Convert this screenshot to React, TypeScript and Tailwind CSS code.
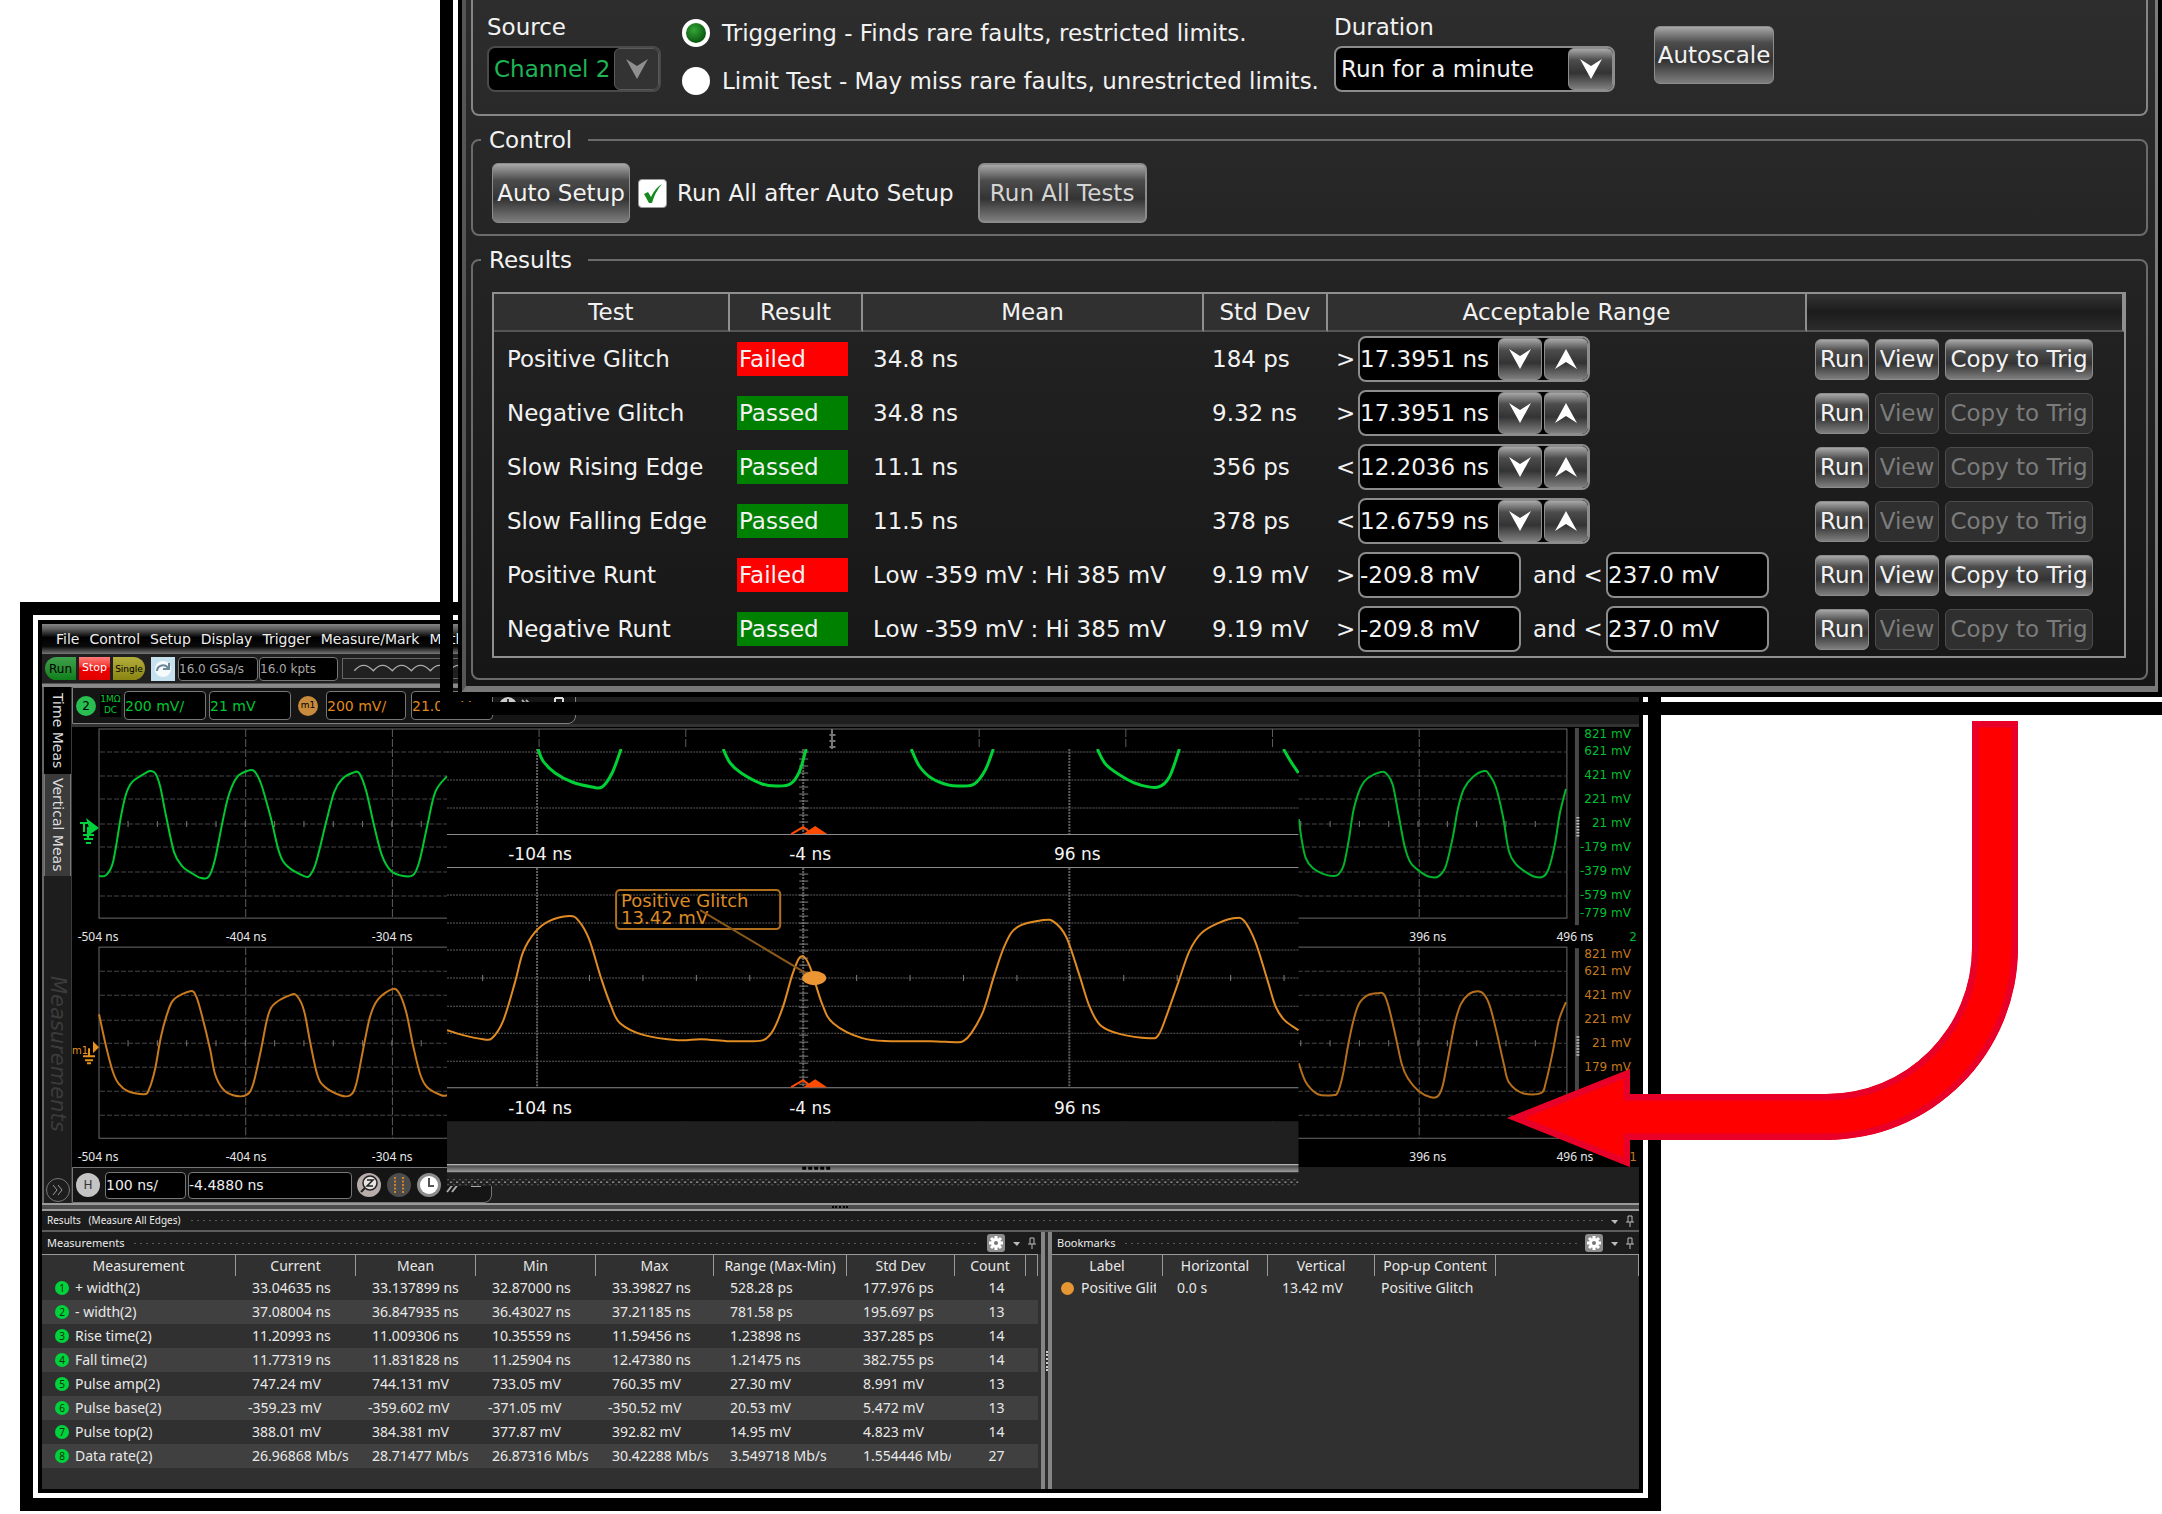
import type { ReactNode } from 'react'

const metal = 'border border-[#8c8c8c] bg-[linear-gradient(to_bottom,#a8a8a8_0%,#4c4c4c_28%,#333_60%,#7e7e7e_100%)]'
const tests = [
  { name: 'Positive Glitch', pass: false, mean: '34.8 ns', dev: '184 ps', sign: '>', low: '17.3951 ns' },
  { name: 'Negative Glitch', pass: true, mean: '34.8 ns', dev: '9.32 ns', sign: '>', low: '17.3951 ns' },
  { name: 'Slow Rising Edge', pass: true, mean: '11.1 ns', dev: '356 ps', sign: '<', low: '12.2036 ns' },
  { name: 'Slow Falling Edge', pass: true, mean: '11.5 ns', dev: '378 ps', sign: '<', low: '12.6759 ns' },
  { name: 'Positive Runt', pass: false, mean: 'Low -359 mV : Hi 385 mV', dev: '9.19 mV', sign: '>', low: '-209.8 mV', high: '237.0 mV' },
  { name: 'Negative Runt', pass: true, mean: 'Low -359 mV : Hi 385 mV', dev: '9.19 mV', sign: '>', low: '-209.8 mV', high: '237.0 mV' },
]

const measurements = [
  ['+ width(2)', '33.04635 ns', '33.137899 ns', '32.87000 ns', '33.39827 ns', '528.28 ps', '177.976 ps', '14'],
  ['- width(2)', '37.08004 ns', '36.847935 ns', '36.43027 ns', '37.21185 ns', '781.58 ps', '195.697 ps', '13'],
  ['Rise time(2)', '11.20993 ns', '11.009306 ns', '10.35559 ns', '11.59456 ns', '1.23898 ns', '337.285 ps', '14'],
  ['Fall time(2)', '11.77319 ns', '11.831828 ns', '11.25904 ns', '12.47380 ns', '1.21475 ns', '382.755 ps', '14'],
  ['Pulse amp(2)', '747.24 mV', '744.131 mV', '733.05 mV', '760.35 mV', '27.30 mV', '8.991 mV', '13'],
  ['Pulse base(2)', '-359.23 mV', '-359.602 mV', '-371.05 mV', '-350.52 mV', '20.53 mV', '5.472 mV', '13'],
  ['Pulse top(2)', '388.01 mV', '384.381 mV', '377.87 mV', '392.82 mV', '14.95 mV', '4.823 mV', '14'],
  ['Data rate(2)', '26.96868 Mb/s', '28.71477 Mb/s', '26.87316 Mb/s', '30.42288 Mb/s', '3.549718 Mb/s', '1.554446 Mb/s', '27'],
]

// Traces, as x y pairs in display units
const greenLeft = [99, 877, 106, 876, 113, 863, 121, 817, 126, 795, 132, 783, 142, 776, 150, 772, 155, 774, 160, 787, 166, 817, 174, 853, 182, 867, 190, 873, 201, 879, 209, 877, 215, 860, 223, 820, 229, 795, 237, 778, 247, 772, 254, 772, 261, 785, 271, 820, 279, 853, 287, 867, 304, 877, 310, 876, 316, 863, 326, 823, 334, 793, 342, 780, 352, 774, 359, 774, 366, 792, 374, 827, 382, 857, 391, 872, 403, 877, 413, 876, 419, 863, 427, 827, 435, 793, 447, 777]
const greenRight = [1298, 820, 1301, 841, 1305, 859, 1312, 869, 1323, 875, 1333, 877, 1338, 875, 1343, 866, 1348, 841, 1353, 810, 1360, 788, 1367, 779, 1380, 773, 1386, 775, 1392, 786, 1398, 817, 1404, 848, 1410, 864, 1420, 873, 1430, 878, 1438, 877, 1445, 867, 1452, 838, 1457, 810, 1463, 790, 1472, 778, 1483, 772, 1488, 775, 1495, 788, 1502, 817, 1508, 852, 1515, 865, 1525, 873, 1535, 878, 1543, 877, 1548, 869, 1554, 845, 1559, 814, 1565, 790]
const orangeLeft = [99, 1015, 106, 1047, 113, 1073, 119, 1085, 128, 1092, 144, 1095, 149, 1090, 155, 1070, 161, 1037, 168, 1012, 174, 1000, 190, 992, 196, 997, 202, 1017, 210, 1050, 215, 1075, 223, 1090, 233, 1096, 246, 1096, 253, 1085, 261, 1050, 267, 1020, 273, 1006, 290, 996, 297, 997, 304, 1012, 310, 1043, 317, 1075, 324, 1087, 340, 1096, 350, 1096, 356, 1085, 363, 1050, 370, 1017, 378, 1000, 392, 990, 399, 994, 406, 1013, 413, 1047, 420, 1075, 427, 1088, 441, 1096, 447, 1096]
const orangeRight = [1298, 1064, 1302, 1076, 1307, 1086, 1317, 1095, 1332, 1096, 1337, 1093, 1342, 1076, 1347, 1048, 1352, 1024, 1358, 1005, 1367, 996, 1377, 994, 1383, 995, 1388, 1008, 1395, 1038, 1401, 1065, 1407, 1079, 1418, 1092, 1430, 1098, 1437, 1097, 1442, 1086, 1448, 1055, 1454, 1024, 1460, 1005, 1468, 995, 1477, 992, 1483, 995, 1489, 1007, 1496, 1034, 1503, 1065, 1508, 1083, 1522, 1094, 1540, 1094, 1545, 1083, 1552, 1052, 1558, 1021, 1565, 1003]
const troughs = [
  [538, 750, 543, 762, 555, 774, 572, 783, 592, 788, 602, 788, 612, 774, 621, 750],
  [723, 750, 730, 764, 741, 774, 762, 785, 777, 787, 790, 785, 799, 773, 806, 750],
  [911, 750, 919, 767, 931, 779, 948, 786, 961, 787, 974, 785, 985, 771, 993, 750],
  [1097, 750, 1106, 766, 1126, 780, 1140, 786, 1158, 788, 1169, 778, 1179, 750],
  [1283, 750, 1290, 762, 1298, 774],
]
const zoomOrange = [447, 1031, 463, 1036, 483, 1040, 492, 1039, 503, 1022, 515, 983, 523, 953, 535, 933, 549, 922, 569, 917, 578, 921, 589, 940, 601, 979, 611, 1007, 620, 1024, 644, 1036, 678, 1041, 701, 1040, 727, 1042, 745, 1042, 763, 1041, 773, 1031, 783, 1007, 792, 976, 799, 959, 805, 959, 811, 971, 822, 1005, 833, 1024, 862, 1039, 891, 1042, 930, 1042, 955, 1043, 963, 1042, 971, 1034, 983, 1012, 994, 976, 1005, 945, 1017, 928, 1043, 921, 1054, 923, 1066, 938, 1079, 976, 1089, 1007, 1100, 1026, 1120, 1035, 1149, 1039, 1158, 1036, 1166, 1017, 1178, 983, 1189, 952, 1201, 934, 1218, 924, 1235, 919, 1244, 922, 1255, 943, 1267, 981, 1275, 1007, 1284, 1021, 1298, 1031]

// Catmull-Rom through the points
function smooth(p: number[]) {
  const n = p.length / 2
  const at = (i: number) => {
    const k = Math.min(Math.max(i, 0), n - 1)
    return [p[k * 2], p[k * 2 + 1]]
  }
  let d = `M${p[0]} ${p[1]}`
  for (let i = 0; i < n - 1; i++) {
    const [a, b, c, e] = [at(i - 1), at(i), at(i + 1), at(i + 2)]
    d += `C${b[0] + (c[0] - a[0]) / 6} ${b[1] + (c[1] - a[1]) / 6} ${c[0] - (e[0] - b[0]) / 6} ${c[1] - (e[1] - b[1]) / 6} ${c[0]} ${c[1]}`
  }
  return d
}

function Dart({ up, dim }: { up?: boolean, dim?: boolean }) {
  return (
    <svg className={up ? 'rotate-180' : ''} width="22" height="20" viewBox="0 0 22 20">
      <path d="M0 0L11 7L22 0L11 20Z" fill={dim ? '#8f8f8f' : '#fff'} />
    </svg>
  )
}

function Btn({ children, className = '', disabled }: { children: ReactNode, className?: string, disabled?: boolean }) {
  return (
    <button
      disabled={disabled}
      className={`flex items-center justify-center whitespace-nowrap rounded-md ${disabled ? 'border border-[#4c4c4c] bg-[#2f2f2f] text-[#7c7c7c]' : metal} ${className}`}
    >
      {children}
    </button>
  )
}

function Select({ id, value, dim }: { id: string, value: string, dim?: boolean }) {
  return (
    <div className="relative">
      <select id={id} disabled={dim} defaultValue={value} className={`h-[46px] w-full appearance-none rounded-lg border-2 bg-black pl-[5px] opacity-100 ${dim ? 'border-[#4a4a4a] text-[#1fb455]' : 'border-[#8c8c8c]'}`}>
        <option>{value}</option>
      </select>
      <span className={`pointer-events-none absolute top-[2px] right-[2px] flex h-[42px] w-[45px] items-center justify-center rounded-md ${dim ? 'border border-[#5a5a5a] bg-[#333]' : metal}`}>
        <Dart dim={dim} />
      </span>
    </div>
  )
}

function Group({ title, children, className }: { title: string, children: ReactNode, className: string }) {
  return (
    <fieldset className={`mt-[10px] min-w-0 rounded-lg border-2 border-[#6b6b6b] pr-5 pl-[19px] ${className}`}>
      <legend className="-ml-[11px] pr-4 pl-2">{title}</legend>
      {children}
    </fieldset>
  )
}

function Dialog() {
  return (
    <section className="relative z-10 ml-[440px] border-b-[13px] border-l-[13px] border-black pb-[5px] pl-[5px] font-['DejaVu_Sans',sans-serif] text-[23px] leading-[28px] text-[#f2f2f2]">
      <div className="bg-black pr-1 pb-[5px] pl-1">
        <div className="border-r-[3px] border-b-[6px] border-l-4 border-r-[#7a7a7a] border-b-[#787878] border-l-[#555] bg-linear-to-b from-[#2d2d2d] to-[#161616] pr-[7px] pb-[6px] pl-[5px]">
          <div className="flex items-start rounded-b-lg border-2 border-t-0 border-[#858585] pt-[13px] pb-[19px] pl-[14px]">
            <div className="mr-[21px] w-[174px]">
              <label htmlFor="source" className="mb-[5px] block">Source</label>
              <Select id="source" value="Channel 2" dim />
            </div>
            <div className="mt-[6px] flex w-[652px] flex-col gap-5 whitespace-nowrap">
              <label className="flex items-center gap-3">
                <input type="radio" name="mode" defaultChecked className="size-7 appearance-none rounded-full border-4 border-white bg-[radial-gradient(circle_at_40%_35%,#35a535,#0b5a12_70%)]" />
                Triggering - Finds rare faults, restricted limits.
              </label>
              <label className="flex items-center gap-3">
                <input type="radio" name="mode" className="size-7 appearance-none rounded-full bg-white" />
                Limit Test - May miss rare faults, unrestricted limits.
              </label>
            </div>
            <div className="mr-[39px] w-[281px]">
              <label htmlFor="duration" className="mb-[5px] block">Duration</label>
              <Select id="duration" value="Run for a minute" />
            </div>
            <Btn className="mt-[13px] h-[58px] w-[120px]">Autoscale</Btn>
          </div>

          <Group title="Control" className="pt-[9px] pb-[11px]">
            <div className="flex items-center">
              <Btn className="h-[60px] w-[138px]">Auto Setup</Btn>
              <label className="ml-2 flex items-center gap-[10px]">
                <span className="relative">
                  <input type="checkbox" defaultChecked className="block size-[29px] appearance-none rounded-sm border border-[#999] bg-white" />
                  <svg className="pointer-events-none absolute top-[5px] left-[5px]" width="20" height="20" viewBox="0 0 20 20">
                    <path d="M1 10L5 8L8 13Q12 4 19 0Q12 8 9 19L6 19Z" fill="#148a1e" />
                  </svg>
                </span>
                Run All after Auto Setup
              </label>
              <Btn className="ml-6 h-[60px] w-[169px] border-2 text-[#d4d4d4]">Run All Tests</Btn>
            </div>
          </Group>

          <Group title="Results" className="pt-[18px] pb-5">
            <div className="border-2 border-[#8f8f8f]">
              <table className="w-full table-fixed border-separate border-spacing-0 whitespace-nowrap">
                <colgroup>
                  <col className="w-[236px]" /><col className="w-[133px]" /><col className="w-[341px]" /><col className="w-[124px]" />
                  <col className="w-[479px]" /><col />
                </colgroup>
                <thead>
                  <tr className="h-[38px] bg-[#303030] *:border-r-2 *:border-b-2 *:border-r-[#8f8f8f] *:border-b-[#555] *:p-0 *:font-normal">
                    <th>Test</th><th>Result</th><th>Mean</th><th>Std Dev</th><th>Acceptable Range</th>
                    <th className="bg-linear-to-b from-[#333] via-[#1c1c1c] to-[#2c2c2c]"></th>
                  </tr>
                </thead>
                <tbody>
                  {tests.map((t) => (
                    <tr key={t.name} className="h-[54px] *:p-0">
                      <td><div className="pl-[13px]">{t.name}</div></td>
                      <td>
                        <div className={`ml-[7px] h-[34px] w-[111px] pl-[2px] leading-[34px] ${t.pass ? 'bg-[#008000]' : 'bg-[#ff0000]'}`}>{t.pass ? 'Passed' : 'Failed'}</div>
                      </td>
                      <td><div className="pl-[10px]">{t.mean}</div></td>
                      <td><div className="pl-2">{t.dev}</div></td>
                      <td>
                        <div className="flex items-center pl-[8px]">
                          <span className="w-[22px]">{t.sign}</span>
                          {t.high ? (
                            <>
                              <input aria-label={`${t.name} low`} defaultValue={t.low} className="h-[46px] w-[163px] rounded-lg border-2 border-[#8c8c8c] bg-black" />
                              <span className="ml-3 w-[73px]">and &lt;</span>
                              <input aria-label={`${t.name} high`} defaultValue={t.high} className="h-[46px] w-[163px] rounded-lg border-2 border-[#8c8c8c] bg-black" />
                            </>
                          ) : (
                            <div className="flex h-[46px] w-[232px] overflow-hidden rounded-lg border-2 border-[#8c8c8c] bg-black">
                              <input aria-label={`${t.name} limit`} defaultValue={t.low} className="w-[138px] bg-transparent" />
                              <Btn className="w-[44px]"><Dart /></Btn>
                              <Btn className="ml-[2px] w-[44px]"><Dart up /></Btn>
                            </div>
                          )}
                        </div>
                      </td>
                      <td>
                        <div className="flex gap-[6px] pl-2">
                          <Btn className="h-[41px] w-[54px]">Run</Btn>
                          <Btn className="h-[41px] w-[64px]" disabled={t.pass}>View</Btn>
                          <Btn className="h-[41px] w-[148px]" disabled={t.pass}>Copy to Trig</Btn>
                        </div>
                      </td>
                    </tr>
                  ))}
                </tbody>
              </table>
            </div>
          </Group>
        </div>
      </div>
    </section>
  )
}

function Grid({ top, lines, bottom }: { top: number, lines: number[], bottom: number }) {
  const mid = lines[3]
  return (
    <g stroke="#5c5c5c" fill="none">
      <rect x="99" y={top} width="1467" height={bottom - top} stroke="#6a6a6a" />
      {lines.map((y) => <path key={y} d={`M100 ${y}H1565`} stroke="#464646" strokeDasharray="5 2" />)}
      {[1, 2, 3, 4, 5, 6, 7, 8, 9].map((k) => <path key={k} d={`M${99 + k * 146.6} ${top}V${bottom}`} strokeDasharray="8 2" />)}
      {Array.from({ length: 49 }, (_, k) => <path key={k} d={`M${128 + k * 29.3} ${mid - 3}V${mid + 3}`} stroke="#777" />)}
    </g>
  )
}

function Display() {
  const scale: [string, number][] = [['821 mV', 735], ['621 mV', 752], ['421 mV', 776], ['221 mV', 800], ['21 mV', 824], ['-179 mV', 848], ['-379 mV', 872], ['-579 mV', 896], ['-779 mV', 914]]
  return (
    <svg viewBox="72 725 1566 443" className="block w-full bg-black">
      <path d="M72 726.5H1638" stroke="#333" strokeWidth="3" />
      <Grid top={730} lines={[753, 777, 800, 825, 848, 873, 897]} bottom={919} />
      <Grid top={948} lines={[972, 996, 1021, 1044, 1068, 1092, 1116]} bottom={1139} />
      <g fill="none" strokeWidth="2">
        <path d={smooth(greenLeft)} stroke="#00c832" />
        <path d={smooth(greenRight)} stroke="#00b42c" />
        <path d={smooth(orangeLeft)} stroke="#c87a1e" />
        <path d={smooth(orangeRight)} stroke="#b46e1c" />
      </g>
      <path d="M831.500 730V750M829 736h6M829 742h6M829 748h6" stroke="#777" strokeWidth="2" />

      {/* trigger and ground marks */}
      <path d="M86 819L99 829L86 838L89 829Z" fill="#00d23c" />
      <path d="M80 824H88M84 824V833M88 828V840M83 836L94 836M84 840H93M86 844H91" stroke="#00d23c" strokeWidth="2" />
      <path d="M93 1042L99 1048L93 1054Z" fill="#e6911e" />
      <path d="M89 1049V1057M83 1057H95M85 1061H93M87 1064H91" stroke="#e6911e" strokeWidth="2" />
      <text x="72" y="1055" fontSize="10" fill="#e6911e">m1</text>

      <g fontSize="12" fill="#e8e8e8" textAnchor="middle" className="font-['Noto_Sans',sans-serif]">
        {[942, 1162].map((y) => (
          <g key={y}>
            <text x="98" y={y}>-504 ns</text>
            <text x="246" y={y}>-404 ns</text>
            <text x="392" y={y}>-304 ns</text>
            <text x="1427" y={y}>396 ns</text>
            <text x="1574" y={y}>496 ns</text>
          </g>
        ))}
      </g>
      <g fill="#484848">
        <rect x="1574" y="729" width="4" height="197" />
        <rect x="1574" y="949" width="4" height="197" />
      </g>
      <path d="M1577 818V838M1577 1037V1057" stroke="#bbb" strokeWidth="3" strokeDasharray="1.500 1.500" />
      <g fontSize="12" fill="#00be32" textAnchor="end">
        {scale.map(([t, y]) => <text key={t} x="1630" y={y + 4}>{t}</text>)}
        <text x="1636" y="942">2</text>
      </g>
      <g fontSize="12" fill="#c3791f" textAnchor="end">
        {scale.slice(0, 6).map(([t, y]) => <text key={t} x="1630" y={y + 224}>{t.replace('-', '')}</text>)}
        <text x="1636" y="1162">1</text>
      </g>
    </svg>
  )
}

// Magnified view of the glitch, laid over the main display
function ZoomView() {
  return (
    <svg viewBox="447 750 851 437" className="absolute top-[25px] left-[23.950%] w-[54.340%]">
      <defs>
        <linearGradient id="bar" x2="0" y2="1">
          <stop offset="0" stopColor="#333" />
          <stop offset="1" stopColor="#a0a0a0" />
        </linearGradient>
        <pattern id="dots" width="6" height="6" patternUnits="userSpaceOnUse">
          <path d="M0 1h2M3 4h2" stroke="#8a8a8a" strokeWidth="1.500" />
        </pattern>
      </defs>
      <rect x="447" y="750" width="851" height="372" fill="#000" />
      <rect x="447" y="1122" width="851" height="65" fill="#1f1f1f" />
      <g stroke="#5e5e5e" strokeDasharray="2 1">
        {[753, 781, 809, 896, 924, 951, 979, 1007, 1034, 1062].map((y) => <path key={y} d={`M447 ${y}H1298`} />)}
        {[537, 803, 1069].map((x) => <path key={x} d={`M${x} 750V835M${x} 869V1088`} strokeWidth="2" />)}
      </g>
      <path d="M447 835.500H1298M447 868.500H1298M447 1088.500H1298" stroke="#8a8a8a" />
      <g stroke="#808080">
        {Array.from({ length: 12 }, (_, k) => <path key={k} d={`M799 ${753 + k * 7}h9`} />)}
        {Array.from({ length: 31 }, (_, k) => <path key={k} d={`M799 ${875 + k * 7}h9`} />)}
        {[-6, -4, -3, -2, -1, 1, 2, 3, 4, 5, 6, 7, 8, 9].map((k) => <path key={k} d={`M${803 + k * 53.4} 976v6`} />)}
      </g>
      <g fill="none" strokeWidth="3" stroke="#00d236">
        {troughs.map((t) => <path key={t[0]} d={smooth(t)} />)}
      </g>
      <path d={smooth(zoomOrange)} fill="none" strokeWidth="2" stroke="#e08c22" />
      {[835, 1088].map((y) => (
        <g key={y}>
          <path d={`M791 ${y}L803 ${y - 7}L812 ${y}`} fill="none" stroke="#ff4b00" strokeWidth="2" />
          <path d={`M803 ${y}L815 ${y - 8}L827 ${y}Z`} fill="#ff4b00" />
        </g>
      ))}
      <rect x="616" y="891" width="164" height="39" rx="4" fill="none" stroke="#b06f1c" strokeWidth="2" />
      <g fontSize="18" fill="#dc8a24">
        <text x="621" y="908">Positive Glitch</text>
        <text x="621" y="925">13.42 mV</text>
      </g>
      <path d="M700 911L814 979" stroke="#8a5818" strokeWidth="2" />
      <ellipse cx="814" cy="979" rx="12" ry="7" fill="#eb9632" />
      <g fontSize="17" fill="#f4f4f4" textAnchor="middle">
        {[861, 1115].map((y) => (
          <g key={y}>
            <text x="540" y={y}>-104 ns</text>
            <text x="810" y={y}>-4 ns</text>
            <text x="1077" y={y}>96 ns</text>
          </g>
        ))}
      </g>
      <rect x="447" y="1165" width="851" height="8" fill="url(#bar)" />
      <path d="M447 1165.500H1298" stroke="#ddd" />
      <path d="M802 1169H830" stroke="#000" strokeWidth="3" strokeDasharray="4 2" />
      <rect x="447" y="1180" width="851" height="6" fill="url(#dots)" />
    </svg>
  )
}

function Field({ value, className }: { value: string, className: string }) {
  return <input aria-label={value} defaultValue={value} className={`rounded-sm border border-[#777] bg-black ${className}`} />
}

function TitleBar({ title, gear, className }: { title: string, gear?: boolean, className: string }) {
  return (
    <div className={`flex items-center gap-[8px] bg-[#1c1c1c] pr-1 pl-[5px] font-['Noto_Sans',sans-serif] text-[#ececec] ${className}`}>
      <h2 className="whitespace-pre">{title}</h2>
      <div className="h-[5px] flex-1 bg-[radial-gradient(#5a5a5a_1px,transparent_1px)] bg-[length:6px_5px]"></div>
      {gear && (
        <svg width="18" height="18" viewBox="0 0 18 18">
          <rect width="18" height="18" rx="3" fill="#8c8c8c" />
          <path d="M9 2V16M2 9H16M4 4L14 14M14 4L4 14" stroke="#fff" strokeWidth="3" />
          <circle cx="9" cy="9" r="5" fill="#fff" />
          <circle cx="9" cy="9" r="2" fill="#777" />
        </svg>
      )}
      <svg width="24" height="12" viewBox="0 0 24 12">
        <path d="M0 5H7L4 9Z" fill="#bbb" />
        <path d="M17 7V1H21V7M15 7H23M19 7V12" stroke="#bbb" fill="none" />
      </svg>
    </div>
  )
}

function Scope() {
  return (
    <section className="-mt-[113px] ml-5 w-[75.900%] border-[13px] border-black bg-white p-[5px] font-['DejaVu_Sans',sans-serif]">
      <div className="bg-black p-1">
        <div className="bg-[#1f1f1f]">
          {/* menu */}
          <nav className="flex h-[30px] items-center gap-[10px] bg-[linear-gradient(to_bottom,#858585_0%,#5a5a5a_18%,#000_45%,#0a0a0a_75%,#777_100%)] pl-[14px] text-sm text-[#eee]">
            <button>File</button><button>Control</button><button>Setup</button><button>Display</button>
            <button>Trigger</button><button>Measure/Mark</button><button>Math</button>
          </nav>

          {/* run controls */}
          <div className="flex h-[30px] items-center border-b border-[#555] bg-[#202020] pl-[3px] text-xs">
            <button className="h-[23px] w-[31px] rounded-l-[12px] bg-linear-to-b from-[#3fa04c] to-[#0c8018] text-black">Run</button>
            <button className="ml-[3px] h-[23px] w-[31px] bg-linear-to-b from-[#ff7a7a] via-[#f00000] to-[#e00000] text-[11px] text-white">Stop</button>
            <button className="ml-[3px] h-[23px] w-[32px] rounded-r-[12px] bg-linear-to-b from-[#b4ae3c] to-[#8a8410] text-[9px] text-black">Single</button>
            <button className="ml-[6px] flex h-[24px] w-[24px] items-center justify-center bg-[#c6e2ee]">
              <svg width="18" height="18" viewBox="0 0 18 18">
                <circle cx="9" cy="9" r="8" fill="#f6fafc" />
                <path d="M3 11A6 6 0 0 1 14 8M15 3V9H9" stroke="#6a8896" strokeWidth="2" fill="none" />
              </svg>
            </button>
            <Field value="16.0 GSa/s" className="ml-[3px] h-[24px] w-[80px] border-[#444] text-xs text-[#a8a8a8]" />
            <Field value="16.0 kpts" className="ml-px h-[24px] w-[79px] border-[#444] text-xs text-[#a8a8a8]" />
            <svg className="ml-[4px] border border-[#666]" width="240" height="21" viewBox="0 0 240 21">
              <path d={'M1 13' + 'q10 -12 21 0'.repeat(11)} stroke="#aaa" fill="none" strokeWidth="1.500" />
            </svg>
          </div>
          <div className="h-[3px] bg-[#8a8a8a]"></div>

          <div className="flex">
            {/* side tabs */}
            <aside className="flex w-[30px] flex-none flex-col items-center border-r border-l-2 border-r-[#3a3a3a] border-l-[#666] bg-[#1d1d1d] text-sm text-[#ddd]">
              <button className="flex h-[87px] w-full items-center justify-center bg-black [writing-mode:vertical-rl]">Time Meas</button>
              <button className="flex h-[102px] w-full items-center justify-center border-y border-[#777] bg-[#3a3a3a] [writing-mode:vertical-rl]">Vertical Meas</button>
              <span className="mt-[100px] text-[21px] leading-[24px] text-[#3b3b3b] italic [writing-mode:vertical-rl]">Measurements</span>
              <button className="mt-auto mb-[1px] flex size-[24px] items-center justify-center rounded-full border border-[#777]">
                <svg width="12" height="12" viewBox="0 0 12 12"><path d="M1 1L5 6L1 11M6 1L10 6L6 11" stroke="#999" fill="none" /></svg>
              </button>
            </aside>

            <div className="min-w-0 flex-1">
              {/* channels */}
              <div className="flex h-[37px] w-[504px] items-center rounded-r-lg border border-[#808080] bg-[#151515] pl-[3px] text-sm">
                <span className="flex size-5 items-center justify-center rounded-full bg-[#28be50] text-xs text-black">2</span>
                <span className="ml-[4px] h-[23px] w-[21px] bg-black text-center text-[9px] leading-[11px] text-[#00c832]">1MΩ<br />DC</span>
                <Field value="200 mV/" className="ml-[3px] h-[29px] w-[82px] text-[#00c832]" />
                <Field value="21 mV" className="ml-[3px] h-[29px] w-[82px] text-[#00c832]" />
                <span className="ml-[7px] flex size-5 items-center justify-center rounded-full bg-[#c88a3c] text-[9px] text-black">m1</span>
                <Field value="200 mV/" className="ml-[8px] h-[29px] w-[80px] text-[#e08a1e]" />
                <Field value="21.0 mV" className="ml-[5px] h-[29px] w-[82px] text-[#e08a1e]" />
                <svg className="ml-[6px]" width="66" height="20" viewBox="0 0 66 20">
                  <circle cx="9" cy="10" r="9" fill="#ccc" />
                  <path d="M9 3V17" stroke="#333" strokeWidth="2" />
                  <path d="M23 4L32 14M27 4L36 14" stroke="#aaa" strokeWidth="2" />
                  <path d="M56 2V10M64 2V10M56 2H64" stroke="#ddd" strokeWidth="2" fill="none" />
                </svg>
              </div>

              <div className="relative">
                <Display />
                {/* horizontal controls */}
                <div className="flex h-[36px] w-[420px] items-center rounded-br-lg border border-[#777] bg-[#151515] pl-[3px] text-sm text-[#eee]">
                  <span className="flex size-6 items-center justify-center rounded-full bg-[#c4c4c4] text-xs text-[#333]">H</span>
                  <Field value="100 ns/" className="ml-[5px] h-[27px] w-[81px]" />
                  <Field value="-4.4880 ns" className="ml-[2px] h-[27px] w-[164px]" />
                  <svg className="ml-[5px]" width="130" height="26" viewBox="0 0 130 26">
                    <circle cx="12" cy="13" r="12" fill="#b9adab" />
                    <circle cx="13" cy="11" r="7" fill="#e8e4e2" stroke="#222" strokeWidth="1.500" />
                    <path d="M10 8H16L10 14H16" stroke="#222" strokeWidth="1.500" fill="none" />
                    <path d="M8 16L4 20" stroke="#222" strokeWidth="2" />
                    <circle cx="42" cy="13" r="12" fill="#4c4c4c" />
                    <path d="M38 5V22M46 5V22" stroke="#d08428" strokeWidth="2" strokeDasharray="2 1.500" />
                    <circle cx="72" cy="13" r="12" fill="#8c8c8c" />
                    <circle cx="72" cy="13" r="9" fill="#fff" />
                    <path d="M72 6V14H77" stroke="#555" strokeWidth="2" fill="none" />
                    <path d="M90 20L97 11M95 20L102 11M114 14H124" stroke="#aaa" strokeWidth="2" />
                  </svg>
                </div>
                <ZoomView />
              </div>
            </div>
          </div>

          <div className="flex h-[8px] items-center justify-center border-t-2 border-b-2 border-[#9a9a9a] bg-[#4c4c4c]">
            <span className="w-4 border-t-2 border-dotted border-black"></span>
          </div>
          <TitleBar title="Results   (Measure All Edges)" className="h-[19px] text-[10px]" />

          {/* result tables */}
          <div className="flex h-[259px] border-t-2 border-[#5c5c5c] font-['Noto_Sans',sans-serif] text-sm leading-[18px] text-[#e8e8e8]">
            <div className="w-[999px] bg-[#303030]">
              <TitleBar title="Measurements" gear className="h-[22px] text-[11px]" />
              <table className="w-[996px] table-fixed border-separate border-spacing-0 whitespace-nowrap">
                <colgroup>
                  <col className="w-[194px]" /><col className="w-[120px]" /><col className="w-[120px]" /><col className="w-[120px]" /><col className="w-[118px]" />
                  <col className="w-[133px]" /><col className="w-[108px]" /><col className="w-[71px]" /><col />
                </colgroup>
                <thead>
                  <tr className="h-[22px] *:border-t *:border-r *:border-[#999] *:p-0 *:font-normal">
                    <th>Measurement</th><th>Current</th><th>Mean</th><th>Min</th><th>Max</th>
                    <th>Range (Max-Min)</th><th>Std Dev</th><th>Count</th><th></th>
                  </tr>
                </thead>
                <tbody>
                  {measurements.map((row, i) => (
                    <tr key={row[0]} className="h-[24px] *:p-0 even:bg-[#404040]">
                      {row.map((cell, j) => (
                        <td key={j}>
                          {j === 0 ? (
                            <div className="flex items-center gap-[6px] pl-[13px]">
                              <span className="flex size-[14px] items-center justify-center rounded-full bg-[#00d23c] text-[10px] text-[#103010]">{i + 1}</span>
                              {cell}
                            </div>
                          ) : (
                            <div className={j === 7 ? 'pl-3 text-center' : `${cell[0] === '-' ? 'ml-[12px]' : 'ml-4'} ${j === 6 ? 'mr-1' : ''} overflow-hidden`}>{cell}</div>
                          )}
                        </td>
                      ))}
                      <td></td>
                    </tr>
                  ))}
                </tbody>
              </table>
            </div>
            <div className="flex w-[11px] items-center justify-center border-x-4 border-[#858585] bg-[#2c2c2c]">
              <span className="h-5 border-l-2 border-dotted border-[#ccc]"></span>
            </div>
            <div className="min-w-0 flex-1 bg-[#303030]">
              <TitleBar title="Bookmarks" gear className="h-[22px] text-[11px]" />
              <table className="w-full table-fixed border-separate border-spacing-0 whitespace-nowrap">
                <colgroup>
                  <col className="w-[111px]" /><col className="w-[105px]" /><col className="w-[107px]" /><col className="w-[121px]" /><col />
                </colgroup>
                <thead>
                  <tr className="h-[22px] *:border-t *:border-r *:border-[#999] *:p-0 *:font-normal">
                    <th>Label</th><th>Horizontal</th><th>Vertical</th><th>Pop-up Content</th><th></th>
                  </tr>
                </thead>
                <tbody>
                  <tr className="h-[24px] *:p-0">
                    <td>
                      <div className="flex items-center gap-[7px] pl-[9px]">
                        <span className="size-[13px] flex-none rounded-full bg-[#e69632]"></span>
                        <span className="w-[75px] overflow-hidden">Positive Glitch</span>
                      </div>
                    </td>
                    <td><div className="pl-[14px]">0.0 s</div></td>
                    <td><div className="pl-[14px]">13.42 mV</div></td>
                    <td><div className="pl-[6px]">Positive Glitch</div></td>
                    <td></td>
                  </tr>
                </tbody>
              </table>
            </div>
          </div>
        </div>
      </div>
    </section>
  )
}

function Arrow() {
  const d = 'M1972 721H2018V948A192 192 0 0 1 1826 1140H1630V1167L1507 1118L1630 1069V1094H1826A146 146 0 0 0 1972 948Z'
  return (
    <svg className="pointer-events-none absolute top-[721px] left-[1507px] z-20" width="511" height="446" viewBox="1507 721 511 446">
      <clipPath id="arrow"><path d={d} /></clipPath>
      <path d={d} fill="#ff0000" stroke="#e80028" strokeWidth="13" clipPath="url(#arrow)" />
    </svg>
  )
}

export default function App() {
  return (
    <main className="relative min-h-screen overflow-hidden bg-white">
      <Dialog />
      <Scope />
      <Arrow />
    </main>
  )
}
